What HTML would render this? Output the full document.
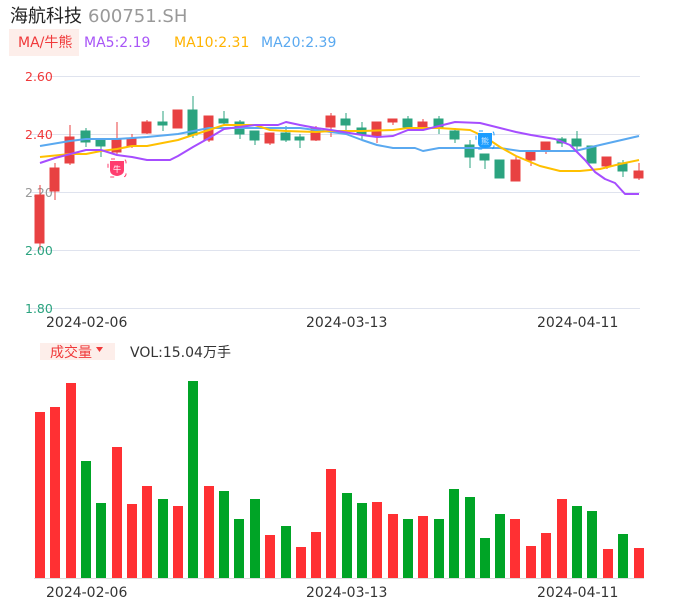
<!DOCTYPE html>
<html><head><meta charset="utf-8"><style>
body{margin:0;background:#fff;width:686px;height:606px;overflow:hidden;font-family:"DejaVu Sans","Noto Sans CJK SC",sans-serif}
</style></head><body>
<svg width="686" height="606" xmlns="http://www.w3.org/2000/svg" style="position:absolute;left:0;top:0" font-family="DejaVu Sans,Noto Sans CJK SC,sans-serif">
<text x="10" y="22" font-size="18" fill="#222">海航科技</text>
<text x="88" y="22" font-size="18" fill="#999">600751.SH</text>
<rect x="9" y="29" width="70" height="27" fill="#fdeeea"/>
<text x="18" y="47" font-size="14" fill="#f0393a">MA/牛熊</text>
<text x="84" y="47" font-size="14" fill="#a855f7">MA5:2.19</text>
<text x="174" y="47" font-size="14" fill="#ffb300">MA10:2.31</text>
<text x="261" y="47" font-size="14" fill="#5aa9f0">MA20:2.39</text>
<g stroke="#dfe3ee" stroke-width="1">
<line x1="30" y1="76.5" x2="640" y2="76.5"/><line x1="30" y1="134.5" x2="640" y2="134.5"/><line x1="30" y1="192.5" x2="640" y2="192.5"/><line x1="30" y1="250.5" x2="640" y2="250.5"/><line x1="30" y1="308.5" x2="640" y2="308.5"/>
</g>
<g font-size="12.5">
<text x="25" y="81" fill="#f0393a">2.60</text><text x="25" y="139" fill="#f0393a">2.40</text><text x="25" y="197" fill="#999">2.20</text><text x="25" y="255" fill="#2ba37f">2.00</text><text x="25" y="313" fill="#2ba37f">1.80</text>
</g>
<g stroke-width="1">
<g fill="#e84142" stroke="#e84142">
<line x1="40" y1="185" x2="40" y2="250"/><rect x="35" y="195" width="9" height="48"/>
<line x1="55" y1="163" x2="55" y2="200"/><rect x="50" y="168" width="9" height="23"/>
<line x1="70" y1="125" x2="70" y2="165"/><rect x="65" y="137" width="9" height="26"/>
<line x1="117" y1="122" x2="117" y2="154"/><rect x="112" y="140" width="9" height="12"/>
<line x1="132" y1="134" x2="132" y2="148"/><rect x="127" y="138" width="9" height="8"/>
<line x1="147" y1="120" x2="147" y2="134"/><rect x="142" y="122" width="9" height="11"/>
<rect x="173" y="110" width="9" height="18"/>
<line x1="209" y1="116" x2="209" y2="142"/><rect x="204" y="116" width="9" height="24"/>
<line x1="270" y1="133" x2="270" y2="145"/><rect x="265" y="133" width="9" height="10"/>
<line x1="316" y1="126" x2="316" y2="141"/><rect x="311" y="128" width="9" height="12"/>
<line x1="331" y1="113" x2="331" y2="137"/><rect x="326" y="116" width="9" height="11"/>
<line x1="377" y1="122" x2="377" y2="143"/><rect x="372" y="122" width="9" height="14"/>
<line x1="393" y1="119" x2="393" y2="125"/><rect x="388" y="119" width="9" height="3"/>
<line x1="423" y1="119" x2="423" y2="131"/><rect x="418" y="122" width="9" height="5"/>
<line x1="516" y1="157" x2="516" y2="181"/><rect x="511" y="160" width="9" height="21"/>
<line x1="531" y1="152" x2="531" y2="166"/><rect x="526" y="152" width="9" height="8"/>
<line x1="546" y1="142" x2="546" y2="154"/><rect x="541" y="142" width="9" height="8"/>
<line x1="607" y1="157" x2="607" y2="169"/><rect x="602" y="157" width="9" height="9"/>
<line x1="639" y1="163" x2="639" y2="180"/><rect x="634" y="171" width="9" height="7"/>
</g>
<g fill="#2ba37f" stroke="#2ba37f">
<line x1="86" y1="128" x2="86" y2="147"/><rect x="81" y="131" width="9" height="11"/>
<line x1="101" y1="140" x2="101" y2="157"/><rect x="96" y="140" width="9" height="6"/>
<line x1="163" y1="111" x2="163" y2="131"/><rect x="158" y="122" width="9" height="3"/>
<line x1="193" y1="96" x2="193" y2="138"/><rect x="188" y="110" width="9" height="25"/>
<line x1="224" y1="111" x2="224" y2="126"/><rect x="219" y="119" width="9" height="4"/>
<line x1="240" y1="120" x2="240" y2="139"/><rect x="235" y="122" width="9" height="12"/>
<line x1="255" y1="131" x2="255" y2="145"/><rect x="250" y="131" width="9" height="9"/>
<line x1="286" y1="126" x2="286" y2="142"/><rect x="281" y="133" width="9" height="7"/>
<line x1="300" y1="134" x2="300" y2="148"/><rect x="295" y="137" width="9" height="3"/>
<line x1="346" y1="113" x2="346" y2="133"/><rect x="341" y="119" width="9" height="6"/>
<line x1="362" y1="122" x2="362" y2="140"/><rect x="357" y="128" width="9" height="6"/>
<line x1="408" y1="116" x2="408" y2="130"/><rect x="403" y="119" width="9" height="8"/>
<line x1="439" y1="116" x2="439" y2="134"/><rect x="434" y="119" width="9" height="8"/>
<line x1="455" y1="128" x2="455" y2="143"/><rect x="450" y="131" width="9" height="8"/>
<line x1="470" y1="140" x2="470" y2="168"/><rect x="465" y="145" width="9" height="12"/>
<line x1="485" y1="154" x2="485" y2="169"/><rect x="480" y="154" width="9" height="6"/>
<rect x="495" y="160" width="9" height="18"/>
<line x1="562" y1="137" x2="562" y2="147"/><rect x="557" y="139" width="9" height="4"/>
<line x1="577" y1="131" x2="577" y2="151"/><rect x="572" y="139" width="9" height="7"/>
<rect x="587" y="146" width="9" height="17"/>
<line x1="623" y1="160" x2="623" y2="177"/><rect x="618" y="163" width="9" height="8"/>
</g>
</g>
<g fill="none" stroke-width="2" stroke-linejoin="round">
<polyline stroke="#5aa9f0" points="40,146 70,141 86,139 117,139 147,137 178,134 209,128 240,128 300,128 331,132 346,134 362,140 377,145 393,148 415,148 423,151 439,148 500,148 520,151 560,151 575,151 600,145 639,136"/>
<polyline stroke="#ffc000" points="40,157 70,154 86,154 101,151 117,149 132,146 147,146 178,140 193,135 209,130 224,125 255,125 270,130 286,131 316,132 331,131 362,131 393,130 408,128 439,128 470,130 485,137 500,147 516,156 540,166 560,171 580,171 600,169 620,164 639,160"/>
<polyline stroke="#a64dff" points="40,163 55,158 86,150 101,150 117,155 132,157 147,160 170,160 178,156 193,147 209,138 224,129 255,125 278,125 286,122 300,125 316,128 331,130 362,135 377,137 393,136 408,130 423,130 439,126 455,122 480,123 500,128 516,132 531,135 555,139 570,145 585,160 595,172 605,179 615,183 625,194 639,194"/>
</g>
<rect x="108" y="159" width="18" height="18" rx="3" fill="none" stroke="#ff3d6e" stroke-dasharray="4 10" stroke-width="1"/>
<path d="M110,161 h14 v9 q0,5 -7,6 q-7,-1 -7,-6z" fill="#ff3d6e"/>
<text x="117" y="172" font-size="8" fill="#fff" text-anchor="middle">牛</text>
<rect x="476" y="131" width="18" height="18" rx="3" fill="none" stroke="#1a9cff" stroke-dasharray="4 10" stroke-width="1"/>
<path d="M478,133 h14 v10 q0,5 -7,5 q-7,0 -7,-5z" fill="#1a9cff"/>
<text x="485" y="144" font-size="8" fill="#cfe8ff" text-anchor="middle">熊</text>
<g font-size="14" fill="#333">
<text x="46" y="327">2024-02-06</text><text x="306" y="327">2024-03-13</text><text x="537" y="327">2024-04-11</text>
<text x="46" y="597">2024-02-06</text><text x="306" y="597">2024-03-13</text><text x="537" y="597">2024-04-11</text>
</g>
<rect x="40" y="343" width="75" height="17" fill="#fdeeea"/>
<text x="50" y="357" font-size="14" fill="#f0393a">成交量</text>
<path d="M96,347 h7 l-3.5,5z" fill="#f0393a"/>
<text x="130" y="357" font-size="14" fill="#333">VOL:15.04万手</text>
<line x1="34" y1="578.5" x2="644" y2="578.5" stroke="#ddd"/>
<g fill="#ff3033">
<rect x="35" y="412" width="10" height="166"/><rect x="50" y="407" width="10" height="171"/><rect x="66" y="383" width="10" height="195"/>
<rect x="112" y="447" width="10" height="131"/><rect x="127" y="504" width="10" height="74"/><rect x="142" y="486" width="10" height="92"/>
<rect x="173" y="506" width="10" height="72"/><rect x="204" y="486" width="10" height="92"/><rect x="265" y="535" width="10" height="43"/>
<rect x="296" y="547" width="10" height="31"/><rect x="311" y="532" width="10" height="46"/><rect x="326" y="469" width="10" height="109"/>
<rect x="372" y="502" width="10" height="76"/><rect x="388" y="514" width="10" height="64"/><rect x="418" y="516" width="10" height="62"/>
<rect x="510" y="519" width="10" height="59"/><rect x="526" y="546" width="10" height="32"/><rect x="541" y="533" width="10" height="45"/>
<rect x="557" y="499" width="10" height="79"/><rect x="603" y="549" width="10" height="29"/><rect x="634" y="548" width="10" height="30"/>
</g>
<g fill="#00a426">
<rect x="81" y="461" width="10" height="117"/><rect x="96" y="503" width="10" height="75"/><rect x="158" y="499" width="10" height="79"/>
<rect x="188" y="381" width="10" height="197"/><rect x="219" y="491" width="10" height="87"/><rect x="234" y="519" width="10" height="59"/>
<rect x="250" y="499" width="10" height="79"/><rect x="281" y="526" width="10" height="52"/><rect x="342" y="493" width="10" height="85"/>
<rect x="357" y="503" width="10" height="75"/><rect x="403" y="519" width="10" height="59"/><rect x="434" y="519" width="10" height="59"/>
<rect x="449" y="489" width="10" height="89"/><rect x="465" y="497" width="10" height="81"/><rect x="480" y="538" width="10" height="40"/>
<rect x="495" y="514" width="10" height="64"/><rect x="572" y="506" width="10" height="72"/><rect x="587" y="511" width="10" height="67"/>
<rect x="618" y="534" width="10" height="44"/>
</g>
</svg>
</body></html>
